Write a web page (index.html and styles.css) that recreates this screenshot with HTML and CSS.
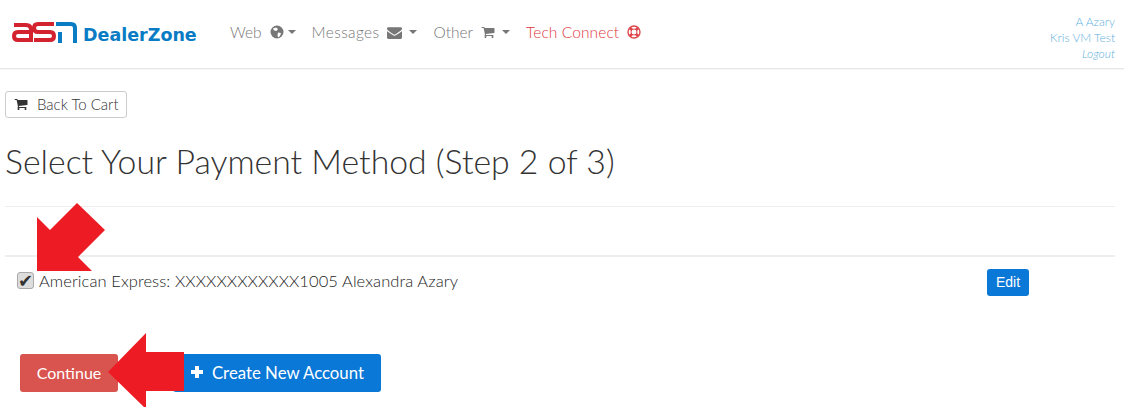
FILE: index.html
```html
<!DOCTYPE html>
<html lang="en">
<head>
    <meta charset="UTF-8">
    <meta name="viewport" content="width=device-width, initial-scale=1.0">
    <title>Select Your Payment Method</title>
    <link rel="stylesheet" href="styles.css">
</head>
<body>
    <header class="navbar">
        <a class="brand" href="#">
            <svg class="brand-mark" width="66" height="24" viewBox="0 0 66 24">
                <path d="M2 4H14Q19 4 19 9V19H6Q2 19 2 15T6 11H19" fill="none" stroke="#d2232f" stroke-width="4"/>
                <path d="M42 3H26Q22 3 22 7T26 11H38Q42 11 42 15T38 19H22" fill="none" stroke="#d2232f" stroke-width="4"/>
                <path d="M44 3H59Q63 3 63 7V22M48 11V22" fill="none" stroke="#0a7cc4" stroke-width="4"/>
            </svg>
            <span class="brand-name">DealerZone</span>
        </a>
        <nav class="nav">
            <a class="nav-link" href="#">Web
                <svg class="icon icon-globe" width="14" height="14" viewBox="0 0 14 14"><circle cx="7" cy="7" r="6.500" fill="#777"/><path d="M3 3.500L6 2.500L8 4L6.500 6L4 5.500ZM8 7.500L11 8L10 11L8 12.500L7.500 10Z" fill="#fff"/></svg>
                <span class="caret"></span></a>
            <a class="nav-link nav-link-wide" href="#">Messages
                <svg class="icon" width="15" height="15" viewBox="0 0 1792 1792"><path fill="#777" d="M1792 710v794q0 66-47 113t-113 47h-1472q-66 0-113-47t-47-113v-794q44 49 101 87 362 246 497 345 57 42 92.500 65.500t94.500 48 110 24.500h2q51 0 110-24.500t94.500-48 92.500-65.500q170-123 498-345 57-39 100-87zm0-294q0 79-49 151t-122 123q-376 261-468 325-10 7-42.500 30.500t-54 38-52 32.500-57.500 27-50 9h-2q-23 0-50-9t-57.500-27-52-32.500-54-38-42.500-30.500q-91-64-262-182.500t-205-142.500q-62-42-117-115.500t-55-136.500q0-78 41.500-130t118.500-52h1472q65 0 112.500 47t47.500 113z"/></svg>
                <span class="caret"></span></a>
            <a class="nav-link" href="#">Other
                <svg class="icon" width="14" height="14" viewBox="0 0 1664 1792"><path fill="#777" d="M640 1536q0 52-38 90t-90 38-90-38-38-90 38-90 90-38 90 38 38 90zm896 0q0 52-38 90t-90 38-90-38-38-90 38-90 90-38 90 38 38 90zm128-1088v512q0 24-16.500 42.500t-40.500 21.500l-1044 122q13 60 13 70 0 16-24 64h920q26 0 45 19t19 45-19 45-45 19h-1024q-26 0-45-19t-19-45q0-11 8-31.500t16-36 21.500-40 15.500-29.500l-177-823h-204q-26 0-45-19t-19-45 19-45 45-19h256q16 0 28.500 6.500t19.500 15.500 13 24.500 8 26 5.500 29.500 4.500 26h1201q26 0 45 19t19 45z"/></svg>
                <span class="caret"></span></a>
            <a class="nav-link nav-link-red" href="#">Tech Connect
                <svg class="icon" width="14" height="14" viewBox="0 0 14 14"><g fill="none" stroke="#e0474c"><circle cx="7" cy="7" r="6" stroke-width="1.400"/><circle cx="7" cy="7" r="3" stroke-width="1"/><path d="M3 3L5 5M11 3L9 5M3 11L5 9M11 11L9 9" stroke-width="2.800"/></g></svg>
            </a>
        </nav>
        <div class="user">
            <a href="#">A Azary</a>
            <a href="#">Kris VM Test</a>
            <a class="logout" href="#">Logout</a>
        </div>
    </header>

    <main class="content">
        <a class="btn-default" href="#">
            <svg class="icon" width="14" height="14" viewBox="0 0 1664 1792"><path fill="#333" d="M640 1536q0 52-38 90t-90 38-90-38-38-90 38-90 90-38 90 38 38 90zm896 0q0 52-38 90t-90 38-90-38-38-90 38-90 90-38 90 38 38 90zm128-1088v512q0 24-16.500 42.500t-40.500 21.500l-1044 122q13 60 13 70 0 16-24 64h920q26 0 45 19t19 45-19 45-45 19h-1024q-26 0-45-19t-19-45q0-11 8-31.500t16-36 21.500-40 15.500-29.500l-177-823h-204q-26 0-45-19t-19-45 19-45 45-19h256q16 0 28.500 6.500t19.500 15.500 13 24.500 8 26 5.500 29.500 4.500 26h1201q26 0 45 19t19 45z"/></svg>
            Back To Cart
        </a>
        <h1>Select Your Payment Method (Step 2 of 3)</h1>
        <hr class="rule">
        <div class="account">
            <label class="account-label"><input type="checkbox" checked> American Express: XXXXXXXXXXXX1005 Alexandra Azary</label>
            <a class="btn-edit" href="#">Edit</a>
        </div>
        <div class="actions">
            <button class="btn-continue" type="button">Continue</button>
            <button class="btn-create" type="button">
                <svg width="14" height="14" viewBox="0 0 14 14"><path fill="#fff" d="M5 1H9V5H13V9H9V13H5V9H1V5H5Z"/></svg>
                Create New Account
            </button>
        </div>
    </main>

    <svg class="arrow arrow-check" width="70" height="70" viewBox="37 203 70 70"><polygon fill="#ed1c24" points="37,217 50,230 77,203 105,230 78,257 92,271 37,271"/></svg>
    <svg class="arrow arrow-continue" width="78" height="76" viewBox="108 333 78 76"><polygon fill="#ed1c24" points="108,372 146,333 146,352 184,352 184,391 146,391 146,409"/></svg>
</body>
</html>
```

FILE: styles.css
```css
html, body {
    height: 100%;
}
body {
    font-family: Lato, sans-serif;
    font-weight: 300;
    margin: 0;
    color: #333;
    background-color: #fff;
    position: relative;
    overflow: hidden;
}
a {
    text-decoration: none;
}
.navbar {
    display: flex;
    align-items: center;
    height: 68px;
    padding: 0 9px 0 12px;
    border-bottom: 1px solid #e7e7e7;
    box-shadow: 0 1px 1px rgba(0, 0, 0, 0.03);
}
.brand {
    display: flex;
    align-items: center;
    width: 218px;
}
.brand-mark {
    margin-top: -2px;
}
.brand-name {
    font-family: "DejaVu Sans", sans-serif;
    font-weight: 700;
    font-size: 17.500px;
    color: #0a7cc4;
    margin-left: 5px;
    margin-top: 1px;
}
.nav {
    display: flex;
    gap: 16px;
    flex: 1;
    margin-bottom: 4px;
}
.nav-link {
    display: flex;
    align-items: center;
    font-size: 15.500px;
    color: #777;
}
.nav-link-wide {
    letter-spacing: 0.350px;
}
.nav-link .icon {
    margin-left: 8px;
}
.nav-link .icon-globe {
    margin-right: -3px;
}
.nav-link-red {
    color: #e03a3f;
    letter-spacing: 0.100px;
}
.icon {
    flex: none;
}
.caret {
    width: 0;
    height: 0;
    margin-left: 7px;
    border-top: 4px solid #777;
    border-left: 4px solid transparent;
    border-right: 4px solid transparent;
}
.user {
    display: flex;
    flex-direction: column;
    align-items: flex-end;
    font-size: 12px;
    line-height: 16px;
    margin-top: 8px;
}
.user a {
    color: #5fb0dc;
}
.logout {
    font-style: italic;
}
.content {
    padding: 22px 9px 0 5px;
}
.btn-default {
    display: flex;
    align-items: center;
    gap: 9px;
    box-sizing: border-box;
    width: 122px;
    height: 27px;
    padding: 0 8px 2px;
    font-size: 15px;
    white-space: nowrap;
    color: #333;
    border: 1px solid #ccc;
    border-radius: 3px;
}
h1 {
    font-size: 33.800px;
    font-weight: 300;
    line-height: 40px;
    margin: 23px 0 0;
}
.rule {
    border: 0;
    border-top: 1px solid #eee;
    margin: 25px 0 0;
    height: 48px;
    border-bottom: 2px solid #eee;
}
.account {
    display: flex;
    align-items: center;
    justify-content: space-between;
    height: 27px;
    margin-top: 12px;
    padding: 0 86px 0 12px;
}
.account-label {
    display: flex;
    align-items: center;
    gap: 5px;
    font-size: 16.500px;
    letter-spacing: 0.090px;
    color: #222;
    margin-bottom: 4px;
}
.account-label input {
    appearance: none;
    width: 17px;
    height: 17px;
    margin: 0;
    background-color: #ddd;
    border: 1px solid #aaa;
    border-radius: 3px;
}
.account-label input::after {
    content: "\2714";
    font-family: "DejaVu Sans", sans-serif;
    font-size: 18px;
    line-height: 15px;
    color: #333;
    display: block;
    text-align: center;
}
.btn-edit {
    font-family: "Liberation Sans", sans-serif;
    font-weight: 400;
    font-size: 14px;
    color: #fff;
    background-color: #0a78d7;
    border-radius: 3px;
    padding: 0 7px;
    line-height: 27px;
    width: 28px;
    text-align: center;
}
.actions {
    display: flex;
    margin-top: 58px;
    margin-left: 15px;
    gap: 55px;
}
.actions button {
    height: 38px;
    border: 0;
    border-radius: 3px;
    color: #fff;
    font-family: Lato, sans-serif;
    font-size: 16px;
    font-weight: 400;
    padding-bottom: 2px;
}
.btn-continue {
    width: 98px;
    background-color: #d9534f;
}
.actions .btn-create {
    width: 208px;
    background-color: #0a78d7;
    display: flex;
    align-items: center;
    justify-content: flex-end;
    gap: 8px;
    padding: 0 17px 2px 0;
    font-size: 16.800px;
}
.arrow {
    position: absolute;
}
.arrow-check {
    left: 37px;
    top: 203px;
}
.arrow-continue {
    left: 108px;
    top: 333px;
}
```
